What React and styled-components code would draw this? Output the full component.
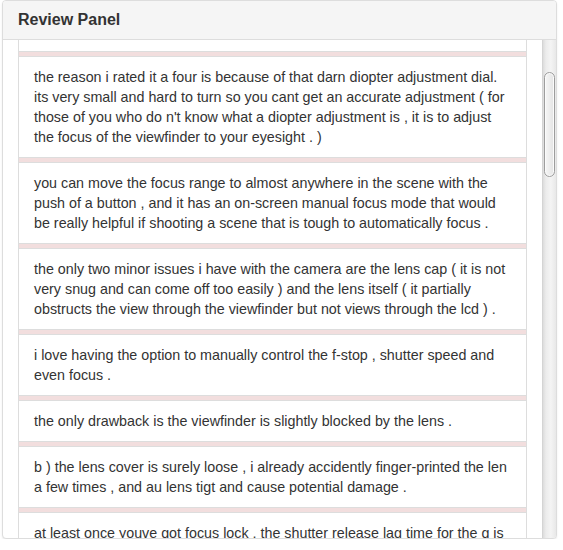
import React, { useLayoutEffect, useRef } from "react";
import styled, { createGlobalStyle } from "styled-components";

const GlobalStyle = createGlobalStyle`
  html, body {
    margin: 0;
    padding: 0;
    background: #fff;
  }
  body {
    font-family: "Liberation Sans", Arial, sans-serif;
    font-size: 14px;
    line-height: 20px;
    color: #333;
  }
`;

const Page = styled.div`
  padding: 0 6px 0 2px;
`;

const Panel = styled.div`
  background: #fff;
  border: 1px solid #ddd;
  border-radius: 4px;
  box-shadow: 0 1px 2px rgba(0, 0, 0, 0.08);
  overflow: hidden;
`;

const Heading = styled.div`
  background: #f5f5f5;
  border-bottom: 1px solid #ddd;
  padding: 10px 15px;
`;

const Title = styled.h3`
  margin: 0;
  font-size: 16px;
  line-height: 18px;
  font-weight: bold;
  color: #333;
`;

const Body = styled.div`
  display: flex;
  height: 498px;
`;

const Viewport = styled.div`
  position: relative;
  flex: 1;
  overflow: hidden;
  padding: 15px 15px;
`;

const Track = styled.div`
  width: 14px;
  flex-shrink: 0;
  box-sizing: border-box;
  border-left: 1px solid #d4d4d4;
  background: linear-gradient(to right, #dcdcdc 0, #ececec 3px, #f4f4f4 60%, #e8e8e8 100%);
  padding: 0 1px 0 1px;
`;

const Thumb = styled.div`
  box-sizing: border-box;
  height: ${(p) => p.$size}px;
  margin-top: ${(p) => p.$offset}px;
  border: 1px solid #9d9d9d;
  border-radius: 6px;
  background: linear-gradient(to right, #f6f6f6, #e4e4e4);
  box-shadow: inset 0 0 0 1px #fbfbfb;
`;

const List = styled.div`
  border-bottom: 1px solid #ddd;
`;

const Item = styled.div`
  border: 1px solid #ddd;
  border-bottom: none;
`;

const Band = styled.div`
  height: 4px;
  background: #f2dede;
  border-bottom: 1px solid #ddd;
`;

const Text = styled.p`
  margin: 0;
  padding: 10px 15px;
  font-size: 14.3px;
  white-space: pre-line;
`;

const reviews = [
  "i bought this camera for a trip overseas .",
  "the picture quality is excellent , colors are accurate and the auto white balance rarely gets it wrong , even indoors under mixed lighting .",
  "the reason i rated it a four is because of that darn diopter adjustment dial. its very small and hard to turn so you cant get an accurate adjustment ( for those of you who do n't know what a diopter adjustment is , it is to adjust the focus of the viewfinder to your eyesight . )",
  "you can move the focus range to almost anywhere in the scene with the push of a button , and it has an on-screen manual focus mode that would be really helpful if shooting a scene that is tough to automatically focus .",
  "the only two minor issues i have with the camera are the lens cap ( it is not very snug and can come off too easily ) and the lens itself ( it partially obstructs the view through the viewfinder but not views through the lcd ) .",
  "i love having the option to manually control the f-stop , shutter speed and even focus .",
  "the only drawback is the viewfinder is slightly blocked by the lens .",
  "b ) the lens cover is surely loose , i already accidently finger-printed the len\na few times , and au lens tigt and cause potential damage .",
  "at least once youve got focus lock , the shutter release lag time for the g is very short , so you rarely miss the moment .",
  "the menus are easy to navigate and the buttons are well placed .",
  "the flash is strong enough for most indoor shots , but it does wash out faces when you are standing too close .",
  "the movie mode is a nice bonus , the sound is decent and the clips look sharp on a tv .",
  "it is a bit heavier than other cameras in this class , but it feels solid and well built in the hand .",
  "the lcd screen swivels , which makes shooting over a crowd or low to the ground much easier .",
  "startup time is quick and the camera is ready to shoot almost as soon as you turn it on .",
  "the macro mode lets you get really close to flowers and insects with great detail .",
  "low light performance is good up to iso 400 , after that noise becomes noticeable .",
  "the included software is clumsy , i ended up using a different program to manage my photos .",
  "the continuous shooting mode is slow compared to a dslr , but fine for casual use .",
  "overall i am very happy with this camera and would recommend it to anyone who wants more control than a point and shoot .",
  "all in all , a great camera for the price .",
];

const FIRST_VISIBLE = 2;

const App = () => {
  const viewRef = useRef(null);
  const listRef = useRef(null);

  useLayoutEffect(() => {
    const view = viewRef.current;
    const list = listRef.current;
    if (!view || !list) return;
    const item = list.children[FIRST_VISIBLE];
    view.scrollTop = item.offsetTop - 11;
  }, []);

  return (
    <Page>
      <GlobalStyle />
      <Panel>
        <Heading>
          <Title>Review Panel</Title>
        </Heading>
        <Body>
          <Viewport ref={viewRef}>
            <List ref={listRef}>
              {reviews.map((text, i) => (
                <Item key={i}>
                  <Band />
                  <Text>{text}</Text>
                </Item>
              ))}
            </List>
          </Viewport>
          <Track>
            <Thumb $offset={32} $size={105} />
          </Track>
        </Body>
      </Panel>
    </Page>
  );
};

export default App;
